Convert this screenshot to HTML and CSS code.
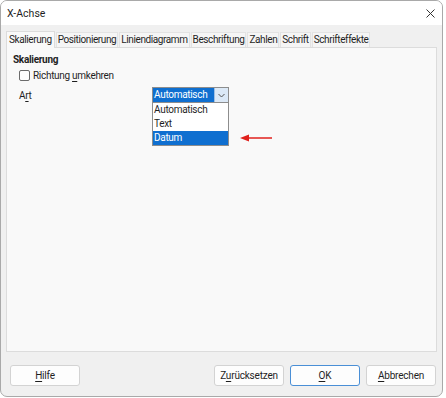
FILE: index.html
```html
<!DOCTYPE html>
<html lang="de">
<head>
    <meta charset="UTF-8">
    <title>X-Achse</title>
    <link rel="stylesheet" href="styles.css">
</head>
<body>
    <div class="dialog">
        <div class="titlebar">
            <span class="title">X-Achse</span>
            <svg class="close" width="9" height="9" viewBox="0 0 9 9">
                <path d="M0.5 0.5 L8.5 8.5 M8.5 0.5 L0.5 8.5" stroke="#333" stroke-width="1" fill="none"/>
            </svg>
        </div>

        <div class="tabs">
            <div class="tab active">Skalierung</div>
            <div class="tab">Positionierung</div>
            <div class="tab">Liniendiagramm</div>
            <div class="tab">Beschriftung</div>
            <div class="tab">Zahlen</div>
            <div class="tab">Schrift</div>
            <div class="tab">Schrifteffekte</div>
        </div>

        <div class="panel">
            <div class="section-title">Skalierung</div>
            <label class="check-row">
                <span class="checkbox"></span>
                <span>Richtung <u>u</u>mkehren</span>
            </label>
            <div class="field-row">
                <span class="field-label">A<u>r</u>t</span>
                <div class="combo">
                    <div class="combo-value">Automatisch</div>
                    <div class="combo-btn">
                        <svg width="7" height="5" viewBox="0 0 7 5">
                            <path d="M0.5 1 L3.5 4 L6.5 1" stroke="#555" stroke-width="1" fill="none"/>
                        </svg>
                    </div>
                    <ul class="combo-list">
                        <li>Automatisch</li>
                        <li>Text</li>
                        <li class="selected">Datum</li>
                    </ul>
                    <svg class="pointer" width="33" height="8" viewBox="0 0 33 8">
                        <path d="M8 4 L32 4" stroke="#e0201c" stroke-width="1.5"/>
                        <path d="M0 4 L9 0.5 L9 7.5 Z" fill="#e0201c"/>
                    </svg>
                </div>
            </div>
        </div>

        <div class="footer">
            <button class="btn"><u>H</u>ilfe</button>
            <div class="spacer"></div>
            <button class="btn">Z<u>u</u>rücksetzen</button>
            <button class="btn default"><u>O</u>K</button>
            <button class="btn"><u>A</u>bbrechen</button>
        </div>
    </div>
</body>
</html>
```

FILE: styles.css
```css
body {
    margin: 0;
    background: #ffffff;
    font-family: Roboto, "Noto Sans", sans-serif;
    font-size: 10px;
    letter-spacing: -0.3px;
    color: #1f1f1f;
}

.dialog {
    width: 441px;
    height: 395px;
    border: 1px solid #a9a9a9;
    border-radius: 7px;
    background: #f0f0f0;
    overflow: hidden;
    display: flex;
    flex-direction: column;
}

/* 타이틀 바 */
.titlebar {
    height: 24px;
    background: #ffffff;
    display: flex;
    align-items: center;
    justify-content: space-between;
    padding: 0 7px 0 6px;
}

.title {
    font-size: 10.5px;
    letter-spacing: 0;
}

/* 탭 */
.tabs {
    display: flex;
    margin: 6px 0 0 5px;
    height: 16px;
    align-items: flex-end;
}

.tab {
    height: 15px;
    line-height: 14px;
    padding: 0 1px;
    margin-right: 1px;
    letter-spacing: -0.4px;
    background: #f5f5f5;
    border: 1px solid #e3e3e3;
    border-bottom: none;
    box-sizing: border-box;
}

.tab.active {
    height: 17px;
    line-height: 16px;
    padding: 0 2px;
    background: #f9f9f9;
    border-color: #dcdcdc;
    position: relative;
    top: 1px;
}

.panel {
    margin: 0 5px;
    height: 305px;
    background: #f9f9f9;
    border: 1px solid #dcdcdc;
    box-sizing: border-box;
    padding: 5px 6px;
}

.section-title {
    font-weight: bold;
    line-height: 14px;
}

.check-row {
    display: flex;
    align-items: center;
    gap: 3px;
    margin: 1px 0 0 6px;
    height: 15px;
}

.checkbox {
    width: 9px;
    height: 9px;
    border: 1px solid #6b6b6b;
    border-radius: 2px;
    background: #fff;
}

.field-row {
    display: flex;
    align-items: center;
    margin: 4px 0 0 6px;
    height: 16px;
}

.field-label {
    width: 133px;
}

u {
    text-decoration-thickness: 1px;
    text-underline-offset: 2px;
}

/* 콤보 박스 */
.combo {
    position: relative;
    width: 77px;
    height: 16px;
    border: 1px solid #8d8d8d;
    box-sizing: border-box;
    display: flex;
    background: #fff;
}

.combo-value {
    flex: 1;
    background: #0f6fd0;
    color: #fff;
    line-height: 14px;
    padding-left: 1px;
}

.combo-btn {
    width: 13px;
    background: #dce9f7;
    border-left: 1px solid #9fc0e4;
    display: flex;
    align-items: center;
    justify-content: center;
}

.combo-list {
    position: absolute;
    top: 14px;
    left: -1px;
    width: 77px;
    margin: 0;
    padding: 0;
    list-style: none;
    background: #fff;
    border: 1px solid #8d8d8d;
    box-sizing: border-box;
}

.combo-list li {
    height: 14px;
    line-height: 14px;
    padding-left: 1px;
}

.combo-list li.selected {
    background: #0f6fd0;
    color: #fff;
}

.pointer {
    position: absolute;
    left: 87px;
    top: 46px;
}

/* 하단 버튼 */
.footer {
    display: flex;
    align-items: center;
    gap: 6px;
    padding: 13px 6px 0 9px;
}

.spacer {
    flex: 1;
}

.btn {
    width: 70px;
    height: 21px;
    font-family: inherit;
    font-size: 10px;
    letter-spacing: -0.2px;
    color: #1f1f1f;
    background: #fdfdfd;
    border: 1px solid #d3d3d3;
    border-radius: 3px;
    padding: 0;
}

.btn.default {
    border-color: #4a8fd6;
}
```
